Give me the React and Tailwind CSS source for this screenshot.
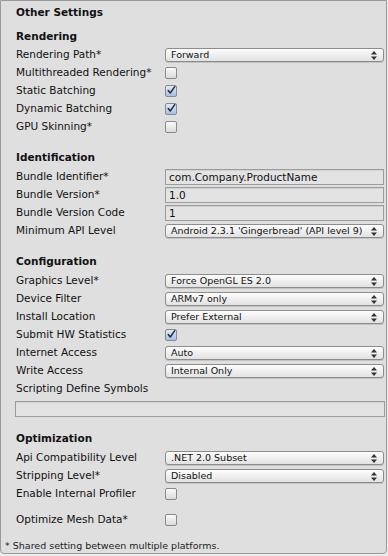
import React from "react"

const font = { fontFamily: '"DejaVu Sans", Verdana, sans-serif' }

function Arrows() {
  return (
    <svg width="6" height="9" viewBox="0 0 6 9" className="shrink-0">
      <path d="M3 0 L6 3.5 L0 3.5 Z" fill="#333" />
      <path d="M3 9 L6 5.5 L0 5.5 Z" fill="#333" />
    </svg>
  )
}

function Dropdown({ value }) {
  return (
    <div className="w-[219px] h-[14px] flex items-center justify-between pl-[5px] pr-[6px] rounded-[3px] border border-[#8c8c8c] bg-gradient-to-b from-[#fdfdfd] to-[#e2e2e2] shadow-[0_1px_0_rgba(0,0,0,0.12)]">
      <span className="text-[9.5px] leading-none text-[#111] whitespace-nowrap">{value}</span>
      <Arrows />
    </div>
  )
}

function Checkbox({ checked }) {
  return (
    <div
      className={
        "w-[12px] h-[12px] rounded-[2px] border border-[#8a8a8a] flex items-center justify-center " +
        (checked
          ? "bg-gradient-to-b from-[#dfe9f6] to-[#a9c0dc]"
          : "bg-gradient-to-b from-[#fbfbfb] to-[#dadada]")
      }
    >
      {checked && (
        <svg width="11" height="11" viewBox="0 0 11 11" className="-mt-[2px] ml-[1px]">
          <path d="M1.5 5.5 L4 8.5 L9.5 0.8" stroke="#1d2c4a" strokeWidth="1.8" fill="none" strokeLinecap="round" strokeLinejoin="round" />
        </svg>
      )}
    </div>
  )
}

function Field({ value, wide }) {
  return (
    <div
      className={
        (wide ? "w-[370px]" : "w-[219px]") +
        " h-[16px] flex items-center px-[3px] border border-[#9c9c9c] bg-[#e3e3e3] shadow-[inset_0_1px_0_rgba(0,0,0,0.08)] text-[10.5px] text-[#111] leading-none"
      }
    >
      {value}
    </div>
  )
}

function Row({ label, children }) {
  return (
    <div className="h-[18px] flex items-center">
      <div className="w-[149px] shrink-0 text-[10.5px] text-[#111] whitespace-nowrap">{label}</div>
      {children}
    </div>
  )
}

function Heading({ children, first }) {
  return (
    <div className={(first ? "mt-[5px] h-[19px]" : "mt-[12px] h-[20px]") + " flex items-center text-[10.5px] font-bold text-[#111]"}>
      {children}
    </div>
  )
}

export default function App() {
  return (
    <div className="w-[388px] h-[556px] bg-[#ededed] overflow-hidden" style={font}>
      <div className="w-[387px] h-[554px] bg-[#dfdfdf] border border-[#9a9a9a] rounded-b-[4px] pt-[3px] pl-[15px] relative">
        <div className="h-[18px] flex items-center text-[10.5px] font-bold text-[#111]">Other Settings</div>

        <Heading first>Rendering</Heading>
        <Row label="Rendering Path*"><Dropdown value="Forward" /></Row>
        <Row label="Multithreaded Rendering*"><Checkbox /></Row>
        <Row label="Static Batching"><Checkbox checked /></Row>
        <Row label="Dynamic Batching"><Checkbox checked /></Row>
        <Row label="GPU Skinning*"><Checkbox /></Row>

        <Heading>Identification</Heading>
        <Row label="Bundle Identifier*"><Field value="com.Company.ProductName" /></Row>
        <Row label="Bundle Version*"><Field value="1.0" /></Row>
        <Row label="Bundle Version Code"><Field value="1" /></Row>
        <Row label="Minimum API Level"><Dropdown value="Android 2.3.1 'Gingerbread' (API level 9)" /></Row>

        <Heading>Configuration</Heading>
        <Row label="Graphics Level*"><Dropdown value="Force OpenGL ES 2.0" /></Row>
        <Row label="Device Filter"><Dropdown value="ARMv7 only" /></Row>
        <Row label="Install Location"><Dropdown value="Prefer External" /></Row>
        <Row label="Submit HW Statistics"><Checkbox checked /></Row>
        <Row label="Internet Access"><Dropdown value="Auto" /></Row>
        <Row label="Write Access"><Dropdown value="Internal Only" /></Row>
        <Row label="Scripting Define Symbols" />
        <div className="mt-[3px] -ml-[1px]"><Field value="" wide /></div>

        <Heading>Optimization</Heading>
        <Row label="Api Compatibility Level"><Dropdown value=".NET 2.0 Subset" /></Row>
        <Row label="Stripping Level*"><Dropdown value="Disabled" /></Row>
        <Row label="Enable Internal Profiler"><Checkbox /></Row>
        <div className="mt-[8px]">
          <Row label="Optimize Mesh Data*"><Checkbox /></Row>
        </div>

        <div className="mt-[12px] -ml-[11px] text-[9.5px] text-[#222] leading-none">* Shared setting between multiple platforms.</div>
      </div>
    </div>
  )
}
